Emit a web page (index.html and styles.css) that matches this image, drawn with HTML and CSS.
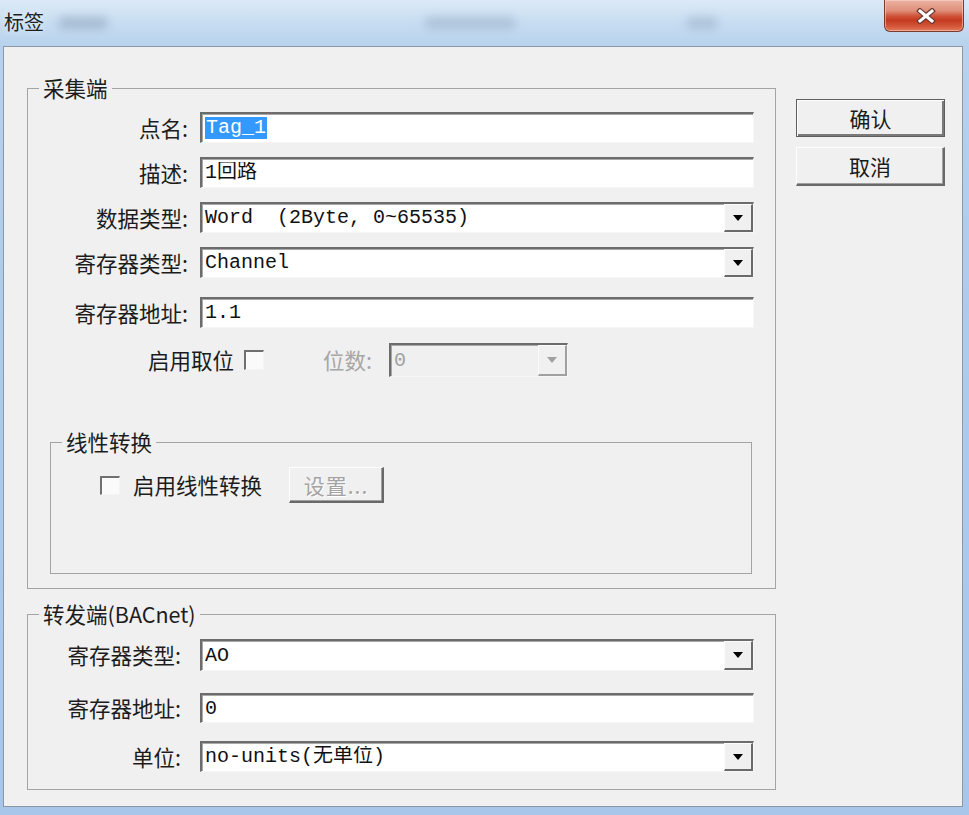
FILE: index.html
```html
<!DOCTYPE html>
<html lang="zh-CN">
<head>
<meta charset="utf-8">
<title>标签</title>
<link rel="stylesheet" href="styles.css">
</head>
<body>
<div class="window">
  <div class="titlebar">
    <span class="title">标签</span>
    <span class="ghost g1"></span>
    <span class="ghost g2"></span>
    <span class="ghost g3"></span>
    <div class="close">
      <svg width="20" height="16" viewBox="0 0 20 16">
        <path d="M4 3 L16 13 M16 3 L4 13" stroke="#6b3b33" stroke-width="5.5" stroke-linecap="square" fill="none"/>
        <path d="M4 3 L16 13 M16 3 L4 13" stroke="#ffffff" stroke-width="3" stroke-linecap="square" fill="none"/>
      </svg>
    </div>
  </div>
  <div class="client">
    <div class="main">
      <fieldset class="group g-collect">
        <legend>采集端</legend>
        <div class="rows">
          <div class="row">
            <span class="lbl">点名:</span>
            <div class="field"><span class="val"><span class="sel">Tag_1</span></span></div>
          </div>
          <div class="row">
            <span class="lbl">描述:</span>
            <div class="field"><span class="val">1回路</span></div>
          </div>
          <div class="row">
            <span class="lbl">数据类型:</span>
            <div class="field combo"><span class="val">Word  (2Byte, 0~65535)</span><span class="arrow"><svg width="10" height="6" viewBox="0 0 10 6"><polygon points="0,0 10,0 5,6" fill="#000"/></svg></span></div>
          </div>
          <div class="row">
            <span class="lbl">寄存器类型:</span>
            <div class="field combo"><span class="val">Channel</span><span class="arrow"><svg width="10" height="6" viewBox="0 0 10 6"><polygon points="0,0 10,0 5,6" fill="#000"/></svg></span></div>
          </div>
          <div class="row addr">
            <span class="lbl">寄存器地址:</span>
            <div class="field"><span class="val">1.1</span></div>
          </div>
        </div>
        <div class="bitrow">
          <span class="txt">启用取位</span>
          <span class="check"></span>
          <span class="dlabel">位数:</span>
          <div class="field combo disabled bits"><span class="val">0</span><span class="arrow"><svg width="10" height="6" viewBox="0 0 10 6"><polygon points="0,0 10,0 5,6" fill="#a0a0a0"/></svg></span></div>
        </div>
        <fieldset class="group g-linear">
          <legend>线性转换</legend>
          <div class="linrow">
            <span class="check small"></span>
            <span class="cktext">启用线性转换</span>
            <div class="btn setbtn">设置...</div>
          </div>
        </fieldset>
      </fieldset>
      <fieldset class="group g-forward">
        <legend>转发端(BACnet)</legend>
        <div class="frows">
          <div class="row r1">
            <span class="lbl">寄存器类型:</span>
            <div class="field combo"><span class="val">AO</span><span class="arrow"><svg width="10" height="6" viewBox="0 0 10 6"><polygon points="0,0 10,0 5,6" fill="#000"/></svg></span></div>
          </div>
          <div class="row r2">
            <span class="lbl">寄存器地址:</span>
            <div class="field"><span class="val">0</span></div>
          </div>
          <div class="row r3">
            <span class="lbl">单位:</span>
            <div class="field combo"><span class="val">no-units(无单位)</span><span class="arrow"><svg width="10" height="6" viewBox="0 0 10 6"><polygon points="0,0 10,0 5,6" fill="#000"/></svg></span></div>
          </div>
        </div>
      </fieldset>
    </div>
    <div class="side">
      <div class="btn okbtn">确认</div>
      <div class="btn cancelbtn">取消</div>
    </div>
  </div>
</div>
</body>
</html>
```

FILE: styles.css
```css
* { box-sizing: border-box; }
html, body { margin: 0; padding: 0; }
body {
  width: 969px;
  height: 815px;
  overflow: hidden;
  font-family: "Noto Sans CJK SC", "Noto Sans", sans-serif;
  background: #a9c8ea;
  color: #1c1c1c;
}
.window {
  width: 969px;
  height: 815px;
  display: flex;
  flex-direction: column;
  background: linear-gradient(to bottom, #dceaf7 0, #c6dcf1 24px, #b8d2ed 46px, #aecbeb 300px, #a7c6ea 100%);
}
.titlebar {
  height: 46px;
  flex: none;
  display: flex;
  align-items: flex-start;
}
.title {
  font-size: 20px;
  line-height: 22px;
  margin: 11px 0 0 4px;
  color: #1f1f1f;
  text-shadow: 0 0 6px #eef5fc;
}
.ghost {
  height: 12px;
  margin-top: 17px;
  background: #7f93ab;
  filter: blur(5px);
  opacity: 0.45;
  border-radius: 6px;
}
.g1 { width: 50px; margin-left: 14px; }
.g2 { width: 92px; margin-left: 316px; opacity: 0.35; }
.g3 { width: 32px; margin-left: 170px; opacity: 0.35; }
.close {
  margin-left: auto;
  margin-right: 5px;
  width: 80px;
  height: 32px;
  border: 1px solid #7c3a2f;
  border-top: none;
  border-radius: 0 0 6px 6px;
  background: linear-gradient(to bottom, #eab3a4 0%, #de8d78 35%, #cf5238 52%, #c43a20 65%, #d4573a 85%, #e07a5c 100%);
  box-shadow: inset 0 0 0 1px rgba(255, 220, 210, 0.5);
  display: flex;
  align-items: center;
  justify-content: center;
  padding-left: 3px;
}
.client {
  flex: 1;
  margin: 0 6px 8px 3px;
  border: 1px solid #8b98a7;
  background: #f0f0f0;
  display: flex;
  align-items: flex-start;
  padding: 30px 0 0 23px;
}
.main {
  width: 749px;
  flex: none;
}
.side {
  margin-left: 20px;
  margin-top: 22px;
  width: 149px;
  display: flex;
  flex-direction: column;
  gap: 10px;
}
fieldset.group {
  margin: 0;
  padding: 0;
  border: 1px solid #a4a4a4;
  min-width: 0;
}
legend {
  font-size: 21.5px;
  line-height: 22px;
  padding: 0 4px;
  margin-left: 11px;
  color: #1c1c1c;
}
.rows {
  display: flex;
  flex-direction: column;
  gap: 14px;
  margin-top: 13px;
}
.row {
  display: flex;
  align-items: center;
  height: 31px;
}
.row.addr { margin-top: 5px; }
.lbl {
  width: 160px;
  margin-right: 12px;
  text-align: right;
  font-size: 21.5px;
  line-height: 24px;
  white-space: nowrap;
}
.field {
  width: 554px;
  height: 100%;
  background: #fff;
  border-style: solid;
  border-width: 2px 1px 1px 2px;
  border-color: #6c6c6c #f6f6f6 #f6f6f6 #6c6c6c;
  box-shadow: inset 1px 1px 0 #a8a8a8;
  display: flex;
  align-items: center;
}
.val {
  flex: 1;
  font-family: "Liberation Mono", "Noto Sans CJK SC", monospace;
  font-size: 20px;
  line-height: 22px;
  padding-left: 3px;
  color: #111;
  white-space: pre;
  overflow: hidden;
}
.sel {
  background: #3399ff;
  color: #fff;
  padding: 0 1px;
}
.combo .arrow {
  flex: none;
  width: 29px;
  height: 100%;
  background: #f0f0f0;
  border-style: solid;
  border-width: 1px 2px 2px 1px;
  border-color: #fbfbfb #6a6a6a #6a6a6a #fbfbfb;
  display: flex;
  align-items: center;
  justify-content: center;
}
.combo.disabled { background: #f0f0f0; }
.combo.disabled .val { color: #a2a2a2; }
.combo.disabled .arrow { border-color: #fbfbfb #a0a0a0 #a0a0a0 #fbfbfb; }
.bitrow {
  display: flex;
  align-items: center;
  height: 34px;
  margin: 15px 0 0 120px;
}
.txt, .cktext {
  font-size: 21.5px;
  line-height: 24px;
  white-space: nowrap;
}
.txt { margin-right: 10px; }
.check {
  flex: none;
  width: 20px;
  height: 20px;
  background: #fafafa;
  border-style: solid;
  border-width: 2px 1px 1px 2px;
  border-color: #707070 #f4f4f4 #f4f4f4 #707070;
}
.check.small { height: 19px; }
.dlabel {
  margin-left: 59px;
  margin-right: 17px;
  font-size: 21.5px;
  line-height: 24px;
  color: #a6a6a6;
}
.field.bits {
  width: 179px;
  height: 34px;
}
fieldset.group.g-linear {
  margin: 54px 23px 14px 22px;
  padding-bottom: 70px;
}
.linrow {
  display: flex;
  align-items: center;
  height: 36px;
  margin: 14px 0 0 49px;
}
.cktext { margin-left: 13px; }
.btn {
  display: flex;
  align-items: center;
  justify-content: center;
  background: #f0f0f0;
  font-size: 21px;
  line-height: 24px;
  color: #1a1a1a;
  border-style: solid;
  border-width: 1px 2px 2px 1px;
  border-color: #fdfdfd #696969 #696969 #fdfdfd;
  box-shadow: inset -1px -1px 0 #a0a0a0;
}
.setbtn {
  width: 95px;
  height: 36px;
  margin-left: 27px;
  color: #a3a3a3;
  text-shadow: 1px 1px 0 #fff;
  letter-spacing: 1px;
}
.okbtn {
  height: 38px;
  border: 1px solid #5e5e5e;
  box-shadow: inset 1px 1px 0 #fdfdfd, inset -2px -2px 0 #7a7a7a;
}
.cancelbtn { height: 39px; }
fieldset.group.g-forward { margin-top: 14px; }
.frows {
  display: flex;
  flex-direction: column;
  margin: 14px 0 17px 0;
}
.frows .lbl { width: 153px; margin-right: 19px; }
.frows .r1 { height: 32px; }
.frows .r2 { height: 30px; margin-top: 22px; }
.frows .r3 { height: 31px; margin-top: 18px; }
```
